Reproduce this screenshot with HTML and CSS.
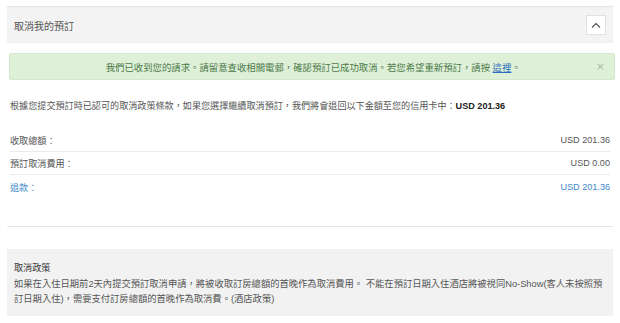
FILE: index.html
```html
<!DOCTYPE html>
<html lang="zh-Hant">
  <head>
    <meta charset="UTF-8" />
    <meta name="viewport" content="width=device-width, initial-scale=1.0" />
    <title>取消我的預訂</title>
    <link rel="stylesheet" href="styles.css">
  </head>

  <body>
    <div class="page">
      <header class="panel-head">
        <h2>取消我的預訂</h2>
        <button class="toggle" aria-label="收起">
          <svg width="10" height="6" viewBox="0 0 10 6"><path d="M1 5.5 L5 1.5 L9 5.5" fill="none" stroke="#555" stroke-width="1.2"/></svg>
        </button>
      </header>

      <div class="alert">
        <span class="alert-text">我們已收到您的請求。請留意查收相關電郵，確認預訂已成功取消。若您希望重新預訂，請按 <a href="#">這裡</a>。</span>
        <button class="close">×</button>
      </div>

      <p class="intro">根據您提交預訂時已認可的取消政策條款，如果您選擇繼續取消預訂，我們將會退回以下金額至您的信用卡中：<b>USD 201.36</b></p>

      <ul class="amounts">
        <li><span>收取總額：</span><span>USD 201.36</span></li>
        <li><span>預訂取消費用：</span><span>USD 0.00</span></li>
        <li class="refund"><span>退款：</span><span>USD 201.36</span></li>
      </ul>

      <hr />

      <div class="policy">
        <h4>取消政策</h4>
        <p>如果在入住日期前2天內提交預訂取消申請，將被收取訂房總額的首晚作為取消費用。 不能在預訂日期入住酒店將被視同No-Show(客人未按照預訂日期入住)，需要支付訂房總額的首晚作為取消費。(酒店政策)</p>
      </div>
    </div>
  </body>
</html>
```

FILE: styles.css
```css
html,
body {
  margin: 0;
  padding: 0;
  background: #fff;
}

body {
  font-family: "Liberation Sans", "Noto Sans CJK TC", sans-serif;
  font-size: 9.1px;
  color: #555;
}

button {
  margin: 0;
  padding: 0;
  border: 0;
  background: none;
  font-family: inherit;
  color: inherit;
  -webkit-appearance: none;
  appearance: none;
}

.page {
  padding: 6px 7px 0 7px;
}

.panel-head {
  box-sizing: border-box;
  height: 37px;
  border-top: 1px solid #e6e6e6;
  background-color: #f3f3f3;
  padding: 0 7px;
  display: flex;
  justify-content: space-between;
  align-items: center;
}

.panel-head h2 {
  margin: 0;
  font-size: 10px;
  font-weight: normal;
  color: #555;
}

.toggle {
  box-sizing: border-box;
  width: 20px;
  height: 20px;
  background-color: #fff;
  border: 1px solid #e2e2e2;
  display: flex;
  align-items: center;
  justify-content: center;
}

.alert {
  box-sizing: border-box;
  margin: 10px -2px 0 2px;
  height: 27px;
  background-color: #dff0d8;
  border: 1px solid #d3e8c8;
  border-radius: 2px;
  color: #4a7a48;
  font-size: 9.4px;
  display: flex;
  align-items: center;
  padding: 0 10px 0 20px;
}

.alert-text {
  flex: 1;
  text-align: center;
}

.alert a {
  color: #2a6ebb;
}

.close {
  font-size: 13px;
  color: #a5bca0;
  line-height: 1;
}

.intro {
  margin: 19px 3px 0 3px;
  line-height: 14px;
}

.intro b {
  color: #222;
}

.amounts {
  list-style: none;
  margin: 16px 3px 0 3px;
  padding: 0;
}

.amounts li {
  box-sizing: border-box;
  height: 23px;
  display: flex;
  justify-content: space-between;
  align-items: center;
  border-bottom: 1px solid #ebebeb;
}

.amounts li.refund {
  border-bottom: none;
  color: #3a87c8;
}

hr {
  margin: 28px 0 0 0;
  border: 0;
  border-top: 1px solid #e6e6e6;
}

.policy {
  margin-top: 22px;
  background-color: #f2f2f2;
  padding: 11px 7px 9px 7px;
}

.policy h4 {
  margin: 0 0 3px 0;
  font-size: 9.1px;
  font-weight: normal;
  color: #333;
}

.policy p {
  margin: 0;
  font-size: 9.3px;
  line-height: 15px;
}
```
